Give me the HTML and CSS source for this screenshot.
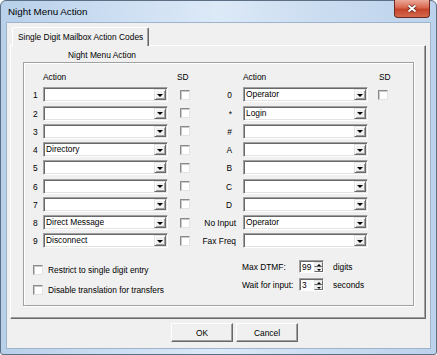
FILE: index.html
```html
<!DOCTYPE html>
<html lang="en">
<head>
    <meta charset="UTF-8">
    <title>Night Menu Action</title>
    <link rel="stylesheet" href="styles.css">
</head>
<body>
    <div class="window">
        <div class="titlebar">
            <span class="title">Night Menu Action</span>
            <span class="close">
                <svg width="12" height="9" viewBox="0 0 12 9">
                    <path d="M2.5 1.5 L9.5 7.5 M9.5 1.5 L2.5 7.5" stroke="#5a2016" stroke-width="3.6"/>
                    <path d="M2.5 1.5 L9.5 7.5 M9.5 1.5 L2.5 7.5" stroke="#fff" stroke-width="2"/>
                </svg>
            </span>
        </div>
        <div class="client">
            <div class="tabs">
                <div class="tab">Single Digit Mailbox Action Codes</div>
            </div>
            <div class="tab-page">
                <div class="group-caption">Night Menu Action</div>
                <div class="group">
                    <div class="codes">
                        <span class="num"></span><span class="head">Action</span><span class="head sd">SD</span>
                        <span></span><span class="head">Action</span><span class="head sd right">SD</span>

                        <span class="num">1</span>
                        <div class="combo"><span class="value"></span><span class="drop"></span></div>
                        <span class="check"></span>
                        <span class="key">0</span>
                        <div class="combo"><span class="value">Operator</span><span class="drop"></span></div>
                        <span class="check right"></span>

                        <span class="num">2</span>
                        <div class="combo"><span class="value"></span><span class="drop"></span></div>
                        <span class="check"></span>
                        <span class="key">*</span>
                        <div class="combo"><span class="value">Login</span><span class="drop"></span></div>
                        <span></span>

                        <span class="num">3</span>
                        <div class="combo"><span class="value"></span><span class="drop"></span></div>
                        <span class="check"></span>
                        <span class="key">#</span>
                        <div class="combo"><span class="value"></span><span class="drop"></span></div>
                        <span></span>

                        <span class="num">4</span>
                        <div class="combo"><span class="value">Directory</span><span class="drop"></span></div>
                        <span class="check"></span>
                        <span class="key">A</span>
                        <div class="combo"><span class="value"></span><span class="drop"></span></div>
                        <span></span>

                        <span class="num">5</span>
                        <div class="combo"><span class="value"></span><span class="drop"></span></div>
                        <span class="check"></span>
                        <span class="key">B</span>
                        <div class="combo"><span class="value"></span><span class="drop"></span></div>
                        <span></span>

                        <span class="num">6</span>
                        <div class="combo"><span class="value"></span><span class="drop"></span></div>
                        <span class="check"></span>
                        <span class="key">C</span>
                        <div class="combo"><span class="value"></span><span class="drop"></span></div>
                        <span></span>

                        <span class="num">7</span>
                        <div class="combo"><span class="value"></span><span class="drop"></span></div>
                        <span class="check"></span>
                        <span class="key">D</span>
                        <div class="combo"><span class="value"></span><span class="drop"></span></div>
                        <span></span>

                        <span class="num">8</span>
                        <div class="combo"><span class="value">Direct Message</span><span class="drop"></span></div>
                        <span class="check"></span>
                        <span class="key long">No Input</span>
                        <div class="combo"><span class="value">Operator</span><span class="drop"></span></div>
                        <span></span>

                        <span class="num">9</span>
                        <div class="combo"><span class="value">Disconnect</span><span class="drop"></span></div>
                        <span class="check"></span>
                        <span class="key long">Fax Freq</span>
                        <div class="combo"><span class="value"></span><span class="drop"></span></div>
                        <span></span>
                    </div>

                    <div class="options">
                        <div class="flags">
                            <div class="flag"><span class="check"></span>Restrict to single digit entry</div>
                            <div class="flag"><span class="check"></span>Disable translation for transfers</div>
                        </div>
                        <div class="limits">
                            <div class="limit">
                                <span class="limit-label">Max DTMF:</span>
                                <span class="spin"><span class="spin-value">99</span><span class="spin-buttons"><span class="up"></span><span class="down"></span></span></span>
                                <span class="unit">digits</span>
                            </div>
                            <div class="limit">
                                <span class="limit-label">Wait for input:</span>
                                <span class="spin"><span class="spin-value">3</span><span class="spin-buttons"><span class="up"></span><span class="down"></span></span></span>
                                <span class="unit">seconds</span>
                            </div>
                        </div>
                    </div>
                </div>
            </div>
            <div class="footer">
                <button class="button">OK</button>
                <button class="button">Cancel</button>
            </div>
        </div>
    </div>
</body>
</html>
```

FILE: styles.css
```css
* {
    box-sizing: border-box;
}
body {
    margin: 0;
    font-family: 'Liberation Sans', Arial, sans-serif;
    font-size: 8.4px;
    color: #000;
    background: #fff;
    overflow: hidden;
}
.window {
    width: 437px;
    height: 355px;
    display: flex;
    flex-direction: column;
    padding: 0 5px 5px 5px;
    border: 1px solid #5d6f84;
    border-radius: 6px 6px 3px 3px;
    background: linear-gradient(to right, #b8d0ea 0%, #cfe0f3 30%, #dce9f7 50%, #cadcf0 75%, #bcd2ec 100%);
}
.titlebar {
    height: 21px;
    display: flex;
    align-items: flex-start;
    padding-left: 2px;
}
.title {
    line-height: 21px;
    font-size: 9.8px;
}
.close {
    margin-left: auto;
    margin-right: 1px;
    margin-top: -1px;
    width: 36px;
    height: 18px;
    display: flex;
    align-items: center;
    justify-content: center;
    border: 1px solid #6e2a20;
    border-top: none;
    border-radius: 0 0 4px 4px;
    background: linear-gradient(#eba999, #d9664d 45%, #c5442b 55%, #d2694f);
}
.client {
    flex: 1;
    background: #f0f0f0;
    border: 1px solid #9fb4cc;
    padding: 4px 4px 0 3px;
}

/* tab control */
.tabs {
    display: flex;
    padding-left: 2px;
    height: 19px;
    position: relative;
    z-index: 1;
}
.tab {
    padding: 0 5px;
    line-height: 18px;
    background: #f0f0f0;
    border: 1px solid;
    border-bottom: none;
    border-color: #fff #696969 transparent #fff;
    box-shadow: inset -1px 0 #a0a0a0;
    border-radius: 2px 2px 0 0;
}
.tab-page {
    margin-top: -1px;
    height: 274px;
    border: 1px solid;
    border-color: #fff #696969 #696969 #fff;
    box-shadow: inset -1px -1px #a0a0a0;
    padding: 4px 11px 0 12px;
}
.group-caption {
    line-height: 11px;
    padding-left: 45px;
    margin-bottom: 1px;
}
.group {
    height: 244px;
    border: 1px solid #a0a0a0;
    box-shadow: inset 1px 1px #fff, 1px 1px #fff;
    padding: 8px 0 0 9px;
}

/* action grid */
.codes {
    display: grid;
    grid-template-columns: 10px 125px 22px 53px 125px 32px;
    grid-template-rows: 13px;
    grid-auto-rows: 15px;
    row-gap: 3.25px;
    align-items: center;
}
.head {
    line-height: 13px;
}
.head.sd {
    margin-left: 9px;
}
.head.sd.right {
    margin-left: 11px;
}
.num {
    grid-column: 1;
    padding-top: 1px;
}
.key {
    text-align: right;
    padding-right: 11px;
    padding-top: 1px;
}
.key.long {
    padding-right: 7px;
}
.combo {
    height: 15px;
    display: flex;
    padding: 1px;
    background: #fff;
    border: 1px solid;
    border-color: #a0a0a0 #fff #fff #a0a0a0;
    box-shadow: inset 1px 1px #696969, inset -1px -1px #e3e3e3;
}
.value {
    flex: 1;
    line-height: 11px;
    padding-left: 1px;
}
.drop {
    width: 12px;
    height: 11px;
    display: flex;
    align-items: center;
    justify-content: center;
    background: #f0f0f0;
    border: 1px solid;
    border-color: #e3e3e3 #696969 #696969 #e3e3e3;
    box-shadow: inset 1px 1px #fff, inset -1px -1px #a0a0a0;
}
.drop::after {
    content: '';
    border-left: 3px solid transparent;
    border-right: 3px solid transparent;
    border-top: 3px solid #000;
    margin-top: 1px;
}
.check {
    width: 10px;
    height: 10px;
    background: #fff;
    border: 1px solid;
    border-color: #8a8a8a #e3e3e3 #e3e3e3 #8a8a8a;
    box-shadow: inset 1px 1px #c8c8c8;
    margin-left: 12px;
}
.check.right {
    margin-left: 10px;
}

/* bottom options */
.options {
    display: flex;
    margin-top: 12px;
}
.flags {
    width: 209px;
    padding-top: 3px;
    display: flex;
    flex-direction: column;
    gap: 6px;
}
.flag {
    display: flex;
    align-items: center;
    gap: 5px;
    height: 14px;
}
.flag .check {
    margin-left: 0;
}
.limits {
    display: flex;
    flex-direction: column;
    gap: 5px;
}
.limit {
    display: flex;
    align-items: center;
    height: 13px;
}
.limit-label {
    width: 57px;
}
.unit {
    margin-left: 9px;
}
.spin {
    width: 25px;
    height: 13px;
    display: flex;
    padding: 1px 0 0 1px;
    background: #fff;
    border: 1px solid;
    border-color: #a0a0a0 #fff #fff #a0a0a0;
    box-shadow: inset 1px 1px #696969;
}
.spin-value {
    flex: 1;
    line-height: 11px;
    padding-left: 1px;
}
.spin-buttons {
    width: 9px;
    display: flex;
    flex-direction: column;
}
.spin-buttons span {
    flex: 1;
    display: flex;
    align-items: center;
    justify-content: center;
    background: #f0f0f0;
    border: 1px solid;
    border-color: #e3e3e3 #696969 #696969 #e3e3e3;
}
.spin-buttons .up::after {
    content: '';
    border-left: 2px solid transparent;
    border-right: 2px solid transparent;
    border-bottom: 2px solid #000;
}
.spin-buttons .down::after {
    content: '';
    border-left: 2px solid transparent;
    border-right: 2px solid transparent;
    border-top: 2px solid #000;
}

/* dialog buttons */
.footer {
    display: flex;
    gap: 3px;
    margin-top: 4px;
    padding-left: 161px;
}
.button {
    width: 62px;
    height: 19px;
    padding: 0;
    font: inherit;
    color: #000;
    background: #f0f0f0;
    border: 1px solid;
    border-color: #fff #696969 #696969 #fff;
    box-shadow: inset -1px -1px #a0a0a0;
}
```
